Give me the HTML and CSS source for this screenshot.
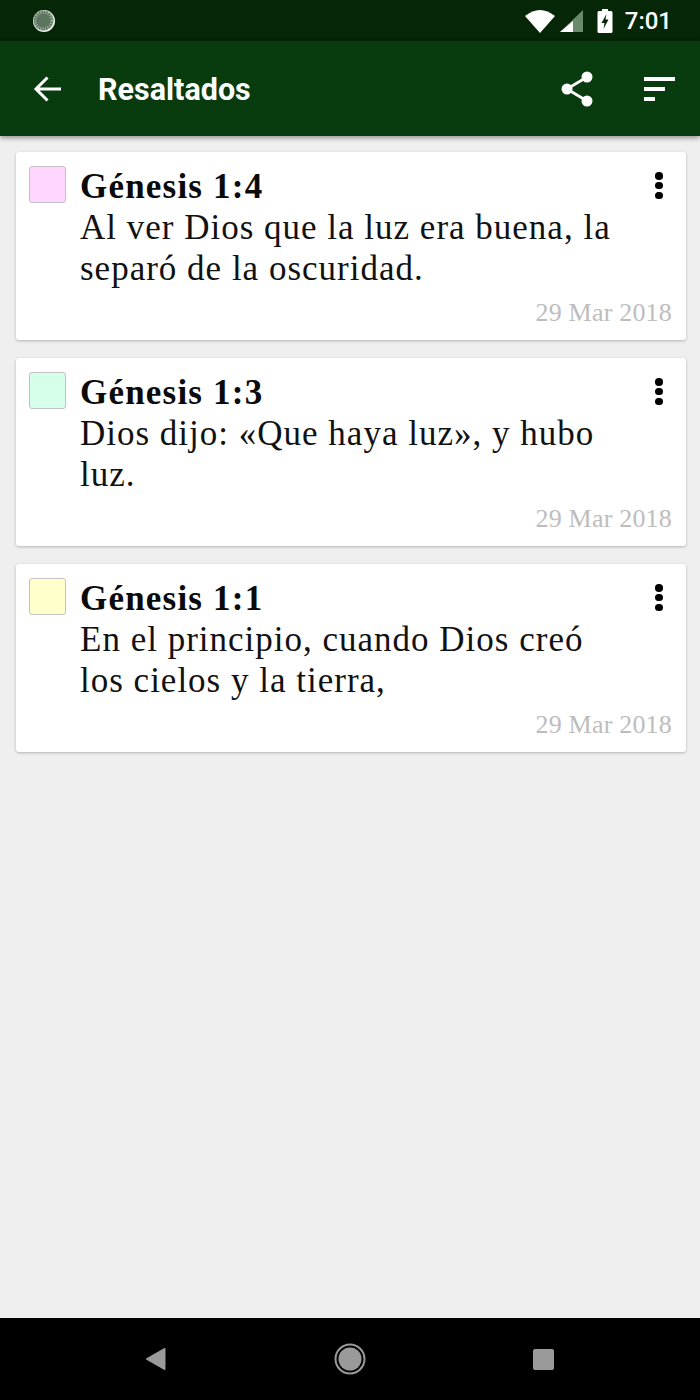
FILE: index.html
```html
<!DOCTYPE html>
<html lang="es">
<head>
<meta charset="utf-8">
<title>Resaltados</title>
<link rel="stylesheet" href="styles.css">
</head>
<body>
<div class="screen">
  <header class="status">
    <svg class="spin" width="26" height="26" viewBox="0 0 26 26"><circle cx="13" cy="13" r="11" fill="#f0f4f0"/><circle cx="12.500" cy="12.500" r="10" fill="#5d755f"/><circle cx="12.500" cy="12.500" r="8.500" fill="none" stroke="#9db09e" stroke-width="3" stroke-dasharray="1.2 1.4"/></svg>
    <div class="status-right">
      <svg width="30" height="24" viewBox="0 0 30 24"><path d="M0 7 Q15 -5 30 7 L15 24Z" fill="#fff"/></svg>
      <svg class="signal" width="24" height="24" viewBox="0 0 24 24"><path d="M23 1V23H0Z" fill="#6a8a6c"/><path d="M13 12V23H0Z" fill="#fff"/></svg>
      <svg class="batt" width="16" height="26" viewBox="0 0 16 26"><path d="M5 1h6v2h3a1.500 1.500 0 0 1 1.500 1.500v19a1.500 1.500 0 0 1-1.500 1.500H2a1.500 1.500 0 0 1-1.500-1.500v-19A1.500 1.500 0 0 1 2 3h3Z" fill="#fff"/><path d="M9.500 6 4.500 15h3l-1 6 5-9.500h-3Z" fill="#062608"/></svg>
      <span class="clock">7:01</span>
    </div>
  </header>
  <nav class="appbar">
    <svg class="back" width="30" height="28" viewBox="0 0 30 28"><path d="M28 14H4M14.500 2.500 3 14l11.500 11.500" fill="none" stroke="#fff" stroke-width="3"/></svg>
    <h1 class="title">Resaltados</h1>
    <svg class="share" width="34" height="36" viewBox="0 0 34 36"><path d="M27 6 7 18l20 12" fill="none" stroke="#fff" stroke-width="2.800"/><circle cx="27" cy="6" r="5.500" fill="#fff"/><circle cx="7" cy="18" r="5.500" fill="#fff"/><circle cx="27" cy="30" r="5.500" fill="#fff"/></svg>
    <div class="sort"><i class="s1"></i><i class="s2"></i><i class="s3"></i></div>
  </nav>
  <main class="list">
    <article class="card">
      <span class="swatch pink"></span>
      <div class="body">
        <h2 class="ref">Génesis 1:4</h2>
        <p class="verse">Al ver Dios que la luz era buena, la<br>separó de la oscuridad.</p>
        <time class="date">29 Mar 2018</time>
      </div>
      <div class="more"><i></i><i></i><i></i></div>
    </article>
    <article class="card">
      <span class="swatch mint"></span>
      <div class="body">
        <h2 class="ref">Génesis 1:3</h2>
        <p class="verse">Dios dijo: «Que haya luz», y hubo<br>luz.</p>
        <time class="date">29 Mar 2018</time>
      </div>
      <div class="more"><i></i><i></i><i></i></div>
    </article>
    <article class="card">
      <span class="swatch yellow"></span>
      <div class="body">
        <h2 class="ref">Génesis 1:1</h2>
        <p class="verse">En el principio, cuando Dios creó<br>los cielos y la tierra,</p>
        <time class="date">29 Mar 2018</time>
      </div>
      <div class="more"><i></i><i></i><i></i></div>
    </article>
  </main>
  <footer class="navbar">
    <svg width="22" height="24" viewBox="0 0 22 24"><path d="M19.500 2 2 12l17.500 10Z" fill="#9a9a9a" stroke="#9a9a9a" stroke-width="2" stroke-linejoin="round"/></svg>
    <svg width="32" height="32" viewBox="0 0 32 32"><circle cx="16" cy="16" r="14.500" fill="none" stroke="#9a9a9a" stroke-width="2"/><circle cx="16" cy="16" r="11.500" fill="#9a9a9a"/></svg>
    <span class="stop"></span>
  </footer>
</div>
</body>
</html>
```
FILE: styles.css
```css
* { box-sizing: border-box; }
html, body { margin: 0; padding: 0; }
body { background: #efefef; }
.screen { width: 700px; height: 1400px; display: flex; flex-direction: column; background: #efefef; overflow: hidden; }
.status { height: 41px; background: #062608; display: flex; align-items: center; justify-content: space-between; padding: 0 28px 0 31px; }
.status-right { display: flex; align-items: center; }
.signal { margin-left: 5px; }
.batt { margin-left: 13px; }
.clock { margin-left: 12px; font: 500 24px "Roboto", sans-serif; color: #fff; }
.appbar { height: 95px; background: #083b0d; display: flex; align-items: center; padding: 0 25px 0 33px; box-shadow: 0 2px 5px rgba(0,0,0,.4); position: relative; flex: none; }
.title { margin: 2px 0 0 35px; font: 700 30.500px "Roboto", sans-serif; color: #fff; flex: 1; }
.share { margin-right: 50px; }
.sort { width: 31px; display: flex; flex-direction: column; gap: 6px; }
.sort i { display: block; height: 4px; background: #fff; }
.s1 { width: 31px; }
.s2 { width: 21px; }
.s3 { width: 11px; }
.list { flex: 1; padding: 16px 14px 0 15.500px; display: flex; flex-direction: column; gap: 18px; }
.card { height: 188px; background: #fff; border-radius: 3px; box-shadow: 0 1px 3px rgba(0,0,0,.25); display: flex; padding: 13.500px 14px 0 14px; }
.swatch { width: 36.500px; height: 37px; margin-left: -.5px; border: 1.500px solid #c2c2c2; border-radius: 3px; flex: none; }
.pink { background: #ffd6ff; }
.mint { background: #d6ffe9; }
.yellow { background: #ffffcc; }
.body { flex: 1; margin-left: 14.500px; display: flex; flex-direction: column; font-family: "Liberation Serif", serif; }
.ref { margin: 0; font-size: 35px; font-weight: 700; line-height: 41px; letter-spacing: 1.200px; color: #0a0a0a; }
.verse { margin: 0; font-size: 35px; line-height: 41px; letter-spacing: 1px; color: #111; }
.date { align-self: flex-end; font-size: 26px; line-height: 30px; margin-top: 9px; letter-spacing: .2px; color: #bdbdbd; }
.more { width: 8px; margin-top: 6.500px; margin-right: 9px; margin-left: -17px; display: flex; flex-direction: column; gap: 2.250px; flex: none; }
.more i { width: 7.500px; height: 7.500px; border-radius: 50%; background: #000; display: block; }
.navbar { height: 82px; background: #000; display: flex; align-items: center; justify-content: space-between; padding: 0 146px 0 145px; flex: none; }
.stop { width: 21px; height: 21px; background: #9a9a9a; border-radius: 2px; }
```
